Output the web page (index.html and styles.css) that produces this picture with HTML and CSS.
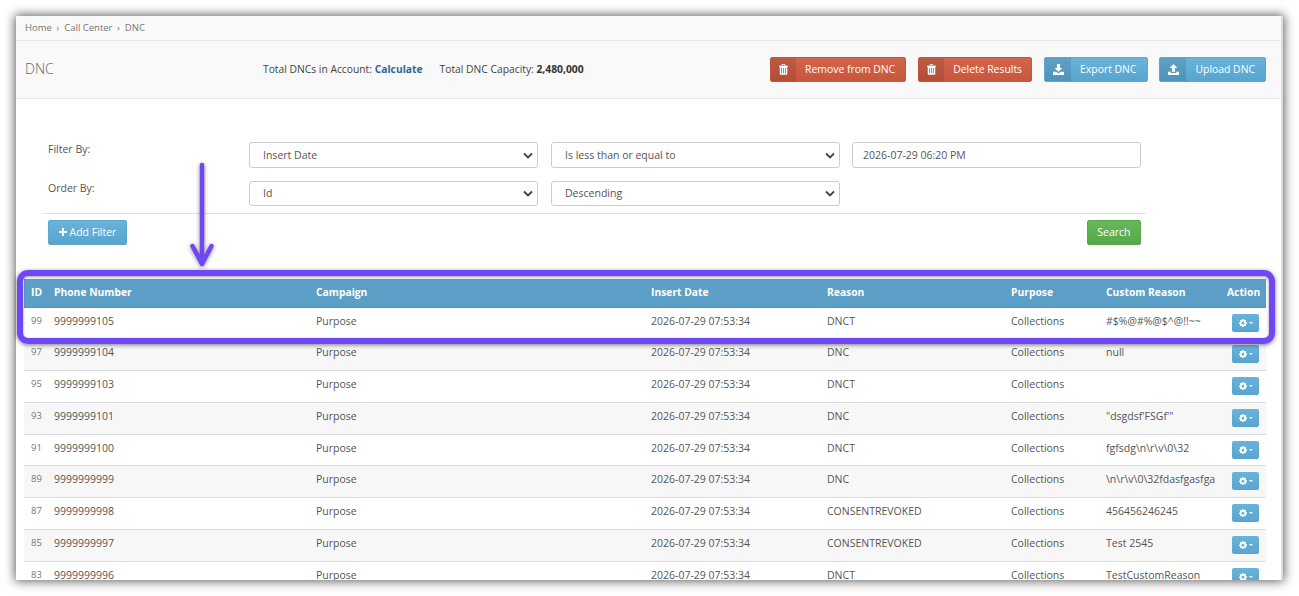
FILE: index.html
```html
<!DOCTYPE html>
<html lang="en">
<head>
  <meta charset="UTF-8" />
  <title>DNC</title>
  <link rel="stylesheet" href="styles.css">
</head>
<body>

  <svg class="icon-defs" width="0" height="0">
    <symbol id="i-trash" viewBox="0 0 12 14"><path fill="currentColor" fill-rule="evenodd" d="M4 0h4l1 2h3v1.500h-1V13a1 1 0 0 1-1 1H2a1 1 0 0 1-1-1V3.500H0V2h3zM4.700 1 4.300 2h3.400l-.4-1zM3 5v7h1V5zm2.500 0v7h1V5zM8 5v7h1V5z"/></symbol>
    <symbol id="i-download" viewBox="0 0 14 14"><path fill="currentColor" d="M5 0h4v5h3L7 10 2 5h3zM0 10h4l3 2 3-2h4v4H0z"/></symbol>
    <symbol id="i-upload" viewBox="0 0 14 14"><path fill="currentColor" d="M7 0l5 5H9v5H5V5H2zM0 10h3.500v1.500h7V10H14v4H0z"/></symbol>
    <symbol id="i-cog" viewBox="0 0 14 14"><path fill="currentColor" fill-rule="evenodd" d="M5.800 0h2.400l.3 1.900 1.100.5L11.200 1.300l1.600 1.700-1.100 1.500.5 1.100 1.800.3v2.300l-1.800.4-.5 1.100 1.100 1.500-1.600 1.700-1.600-1.100-1.100.5-.3 1.700H5.800l-.3-1.700-1.100-.5-1.600 1.100L1.200 11.700l1.100-1.500-.5-1.100L0 8.700V6.400l1.800-.3.500-1.100L1.200 3.500 2.800 1.300l1.600 1.100 1.100-.5zM7 4.800a2.500 2.500 0 1 0 0 5 2.500 2.500 0 0 0 0-5z"/></symbol>
  </svg>

  <div class="card">
    <div class="breadcrumb">
      <a>Home</a><span class="sep">›</span><a>Call Center</a><span class="sep">›</span><a>DNC</a>
    </div>

    <header class="page-head">
      <h1>DNC</h1>
      <div class="stats">
        <span>Total DNCs in Account: <a class="link">Calculate</a></span>
        <span>Total DNC Capacity: <b>2,480,000</b></span>
      </div>
      <div class="actions">
        <a class="btn-label red"><span class="ico"><svg><use href="#i-trash"/></svg></span><span class="txt">Remove from DNC</span></a>
        <a class="btn-label red"><span class="ico"><svg><use href="#i-trash"/></svg></span><span class="txt">Delete Results</span></a>
        <a class="btn-label blue"><span class="ico"><svg><use href="#i-download"/></svg></span><span class="txt">Export DNC</span></a>
        <a class="btn-label blue"><span class="ico"><svg><use href="#i-upload"/></svg></span><span class="txt">Upload DNC</span></a>
      </div>
    </header>

    <form class="filters">
      <div class="filter-row">
        <label>Filter By:</label>
        <select><option>Insert Date</option></select>
        <select><option>Is less than or equal to</option></select>
        <input type="text" value="2026-07-29 06:20 PM">
      </div>
      <div class="filter-row order">
        <label>Order By:</label>
        <select><option>Id</option></select>
        <select><option>Descending</option></select>
      </div>
      <div class="filter-foot">
        <a class="btn blue">
          <svg class="plus" viewBox="0 0 10 10"><path fill="currentColor" d="M3.700 0h2.600v3.700H10v2.600H6.300V10H3.700V6.300H0V3.700h3.700z"/></svg>Add Filter
        </a>
        <a class="btn green">Search</a>
      </div>
    </form>

    <table class="grid">
      <colgroup>
        <col class="c-id"><col class="c-phone"><col class="c-camp"><col class="c-date">
        <col class="c-reason"><col class="c-purpose"><col class="c-custom"><col class="c-action">
      </colgroup>
      <thead>
        <tr><th>ID</th><th>Phone Number</th><th>Campaign</th><th>Insert Date</th><th>Reason</th><th>Purpose</th><th>Custom Reason</th><th class="right">Action</th></tr>
      </thead>
      <tbody>
        <tr><td class="id">99</td><td>9999999105</td><td>Purpose</td><td>2026-07-29 07:53:34</td><td>DNCT</td><td>Collections</td><td>#$%@#%@$^@!!~~</td><td class="right"><a class="gear"><svg><use href="#i-cog"/></svg><i></i></a></td></tr>
        <tr><td class="id">97</td><td>9999999104</td><td>Purpose</td><td>2026-07-29 07:53:34</td><td>DNC</td><td>Collections</td><td>null</td><td class="right"><a class="gear"><svg><use href="#i-cog"/></svg><i></i></a></td></tr>
        <tr><td class="id">95</td><td>9999999103</td><td>Purpose</td><td>2026-07-29 07:53:34</td><td>DNCT</td><td>Collections</td><td></td><td class="right"><a class="gear"><svg><use href="#i-cog"/></svg><i></i></a></td></tr>
        <tr><td class="id">93</td><td>9999999101</td><td>Purpose</td><td>2026-07-29 07:53:34</td><td>DNC</td><td>Collections</td><td>"dsgdsf'FSGf'"</td><td class="right"><a class="gear"><svg><use href="#i-cog"/></svg><i></i></a></td></tr>
        <tr><td class="id">91</td><td>9999999100</td><td>Purpose</td><td>2026-07-29 07:53:34</td><td>DNCT</td><td>Collections</td><td>fgfsdg\n\r\v\0\32</td><td class="right"><a class="gear"><svg><use href="#i-cog"/></svg><i></i></a></td></tr>
        <tr><td class="id">89</td><td>9999999999</td><td>Purpose</td><td>2026-07-29 07:53:34</td><td>DNC</td><td>Collections</td><td>\n\r\v\0\32fdasfgasfga</td><td class="right"><a class="gear"><svg><use href="#i-cog"/></svg><i></i></a></td></tr>
        <tr><td class="id">87</td><td>9999999998</td><td>Purpose</td><td>2026-07-29 07:53:34</td><td>CONSENTREVOKED</td><td>Collections</td><td>456456246245</td><td class="right"><a class="gear"><svg><use href="#i-cog"/></svg><i></i></a></td></tr>
        <tr><td class="id">85</td><td>9999999997</td><td>Purpose</td><td>2026-07-29 07:53:34</td><td>CONSENTREVOKED</td><td>Collections</td><td>Test 2545</td><td class="right"><a class="gear"><svg><use href="#i-cog"/></svg><i></i></a></td></tr>
        <tr><td class="id">83</td><td>9999999996</td><td>Purpose</td><td>2026-07-29 07:53:34</td><td>DNCT</td><td>Collections</td><td>TestCustomReason</td><td class="right"><a class="gear"><svg><use href="#i-cog"/></svg><i></i></a></td></tr>
      </tbody>
    </table>
  </div>

  <!-- annotation drawn over the screenshot -->
  <div class="callout-box"></div>
  <svg class="callout-arrow" viewBox="0 0 40 116">
    <path d="M20 5 V104 M10.500 86 L20 104 L29.500 86" fill="none" stroke="#6f47f4" stroke-width="4.500" stroke-linecap="round" stroke-linejoin="round"/>
  </svg>

</body>
</html>
```

FILE: styles.css
```css
* {
  margin: 0;
  padding: 0;
  box-sizing: border-box;
}

html, body {
  height: 100%;
  overflow: hidden;
  background: #fff;
  font-family: "Open Sans", sans-serif;
  font-size: 10.5px;
  color: #555;
}

body {
  padding: 16px;
  position: relative;
}

.icon-defs {
  position: absolute;
}

.card {
  height: 564px;
  overflow: hidden;
  background: #fff;
  border-right: 2px solid #ddd;
  box-shadow: 0 0 10px 1px rgba(0, 0, 0, 0.65);
}

.breadcrumb {
  height: 25px;
  padding: 0 0 2px 9px;
  display: flex;
  align-items: center;
  gap: 4.500px;
  background: #f9f9f9;
  border-bottom: 1px solid #e7e7e7;
  font-size: 9.5px;
  color: #777;
}

.breadcrumb .sep {
  margin-right: 0.500px;
}

.page-head {
  height: 58px;
  padding: 0 15px 0 9px;
  display: flex;
  align-items: center;
  background: #f9f9f9;
  border-bottom: 1px solid #e7e7e7;
}

.page-head h1 {
  width: 238px;
  padding-bottom: 2px;
  font-size: 14px;
  font-weight: 300;
  color: #666;
}

.stats {
  display: flex;
  gap: 17px;
  padding-bottom: 2px;
  font-size: 10.3px;
  color: #444;
}

.stats b {
  color: #333;
}

.link {
  font-weight: 700;
  color: #336699;
}

.actions {
  display: flex;
  gap: 12px;
  margin-left: auto;
}

.btn-label {
  height: 25px;
  display: flex;
  align-items: center;
  border-radius: 2px;
  color: #fff;
  overflow: hidden;
  font-size: 10.4px;
}

.btn-label:last-child {
  margin-left: -1px;
}

.btn-label .ico {
  width: 25px;
  height: 100%;
  display: flex;
  align-items: center;
  justify-content: center;
  background: rgba(0, 0, 0, 0.1);
}

.btn-label .ico svg {
  width: 9px;
  height: 11px;
}

.btn-label .txt {
  padding: 0 10px 2px 9px;
}

.btn-label:nth-child(2) .txt { padding-right: 9px; }
.btn-label:nth-child(3) .txt { padding-right: 11px; }

.btn-label:nth-child(3) .ico svg,
.btn-label:nth-child(4) .ico svg { width: 11px; }
.btn-label:nth-child(3) .ico { width: 26px; }
.btn-label:nth-child(4) .ico { width: 26px; }

.red { background: linear-gradient(#d2654c, #c8563c); border: 1px solid #c5553c; }
.blue { background: linear-gradient(#6ab3da, #57a5cf); border: 1px solid #5aa7d0; }
.green { background: linear-gradient(#66b85a, #55aa48); border: 1px solid #55aa48; }

.filters {
  height: 180px;
  padding: 43px 136px 0 26px;
}

.filter-row {
  display: flex;
  align-items: flex-start;
  gap: 13px;
  height: 39px;
}

.filter-row.order {
  height: 32px;
}

.filter-row label {
  flex: 0 0 195px;
  margin-right: -1px;
  padding-left: 6px;
  line-height: 14px;
  color: #555;
}

.filter-row select,
.filter-row input {
  flex: 0 0 289px;
  height: 26px;
  padding: 0 0 1px 13px;
  border: 1px solid #ccc;
  border-radius: 3px;
  background-color: #fff;
  font-family: inherit;
  font-size: 10.5px;
  color: #555;
}

.filter-row.order select {
  height: 25px;
}

.filter-row select {
  appearance: none;
  background-image: url("data:image/svg+xml,%3Csvg xmlns='http://www.w3.org/2000/svg' viewBox='0 0 10 7'%3E%3Cpath d='M1 1.500 L5 5.500 L9 1.500' fill='none' stroke='%23444' stroke-width='1.800'/%3E%3C/svg%3E");
  background-repeat: no-repeat;
  background-position: right 4px center;
  background-size: 10px 7px;
}

.filter-row input {
  margin-left: -1px;
  padding-left: 10px;
}

.filter-foot {
  width: 1104px;
  padding: 6px 5px 0 6px;
  display: flex;
  justify-content: space-between;
  border-top: 1px solid #e2e2e2;
}

.btn {
  height: 25px;
  padding: 0 9.500px 2px;
  display: flex;
  align-items: center;
  border-radius: 2px;
  color: #fff;
}

.plus {
  width: 8px;
  height: 8px;
  margin-right: 3px;
}

.grid {
  width: 1242px;
  margin-left: 8px;
  table-layout: fixed;
  border-collapse: collapse;
}

.c-id { width: 23px; }
.c-phone { width: 262px; }
.c-camp { width: 335px; }
.c-date { width: 176px; }
.c-reason { width: 184px; }
.c-purpose { width: 95px; }
.c-custom { width: 121px; }
.c-action { width: 46px; }

.grid th {
  height: 28px;
  padding: 0 7px 2px;
  background: #5b9fc6;
  border-bottom: 1px solid #4f94bc;
  text-align: left;
  font-size: 10.3px;
  font-weight: 700;
  color: #fff;
}

.grid td {
  height: 31.800px;
  padding: 6px 7px 0;
  vertical-align: top;
  line-height: 14px;
  white-space: nowrap;
  color: #555;
  border-bottom: 1px solid #ddd;
}

.grid tbody tr:nth-child(even) td {
  background: #f7f7f7;
}

.grid .id {
  font-size: 9.500px;
  color: #777;
}

.grid .right {
  text-align: right;
}

.grid td.right {
  padding-top: 6px;
}

.gear {
  width: 27px;
  height: 18px;
  display: inline-flex;
  align-items: center;
  justify-content: center;
  gap: 2px;
  border-radius: 2px;
  background: linear-gradient(#6ab3da, #57a5cf);
  color: #fff;
}

.gear svg {
  width: 8px;
  height: 8px;
}

.gear i {
  width: 0;
  height: 0;
  border-left: 2.500px solid transparent;
  border-right: 2.500px solid transparent;
  border-top: 2.500px solid #fff;
}

.callout-box {
  position: absolute;
  left: 17px;
  top: 270px;
  width: 1258px;
  height: 74px;
  border: 6px solid #6f47f4;
  border-radius: 11px;
  box-shadow: 0 1px 4px rgba(0, 0, 0, 0.5), inset 0 1px 3px rgba(0, 0, 0, 0.4);
}

.callout-arrow {
  position: absolute;
  left: 182px;
  top: 160px;
  width: 40px;
  height: 116px;
  filter: drop-shadow(0 1px 2px rgba(0, 0, 0, 0.45));
}
```
